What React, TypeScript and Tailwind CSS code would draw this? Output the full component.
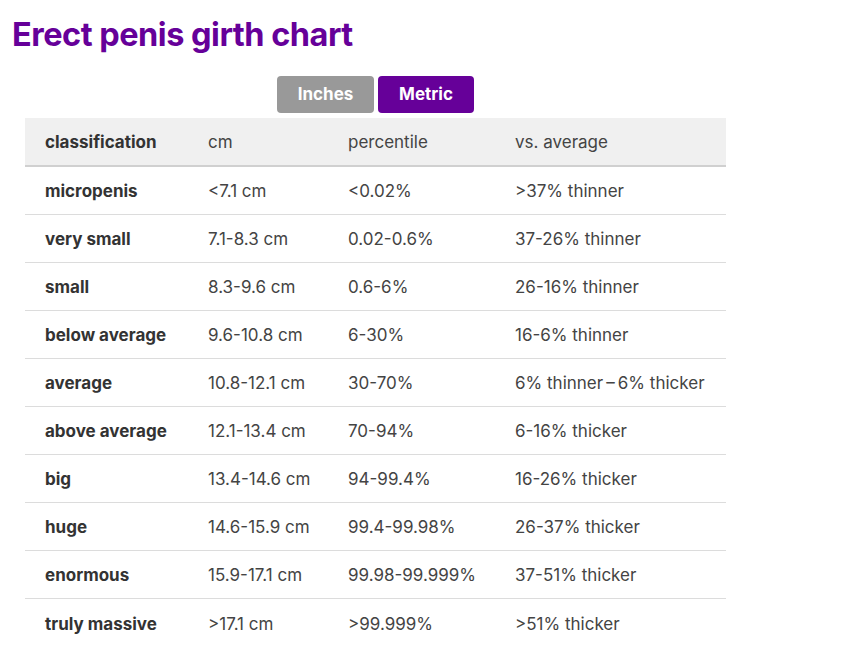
import React from "react";

const rows: [string, string, string, string][] = [
  ["micropenis", "<7.1 cm", "<0.02%", ">37% thinner"],
  ["very small", "7.1-8.3 cm", "0.02-0.6%", "37-26% thinner"],
  ["small", "8.3-9.6 cm", "0.6-6%", "26-16% thinner"],
  ["below average", "9.6-10.8 cm", "6-30%", "16-6% thinner"],
  ["average", "10.8-12.1 cm", "30-70%", "6% thinner\u2009\u2013\u20096% thicker"],
  ["above average", "12.1-13.4 cm", "70-94%", "6-16% thicker"],
  ["big", "13.4-14.6 cm", "94-99.4%", "16-26% thicker"],
  ["huge", "14.6-15.9 cm", "99.4-99.98%", "26-37% thicker"],
  ["enormous", "15.9-17.1 cm", "99.98-99.999%", "37-51% thicker"],
  ["truly massive", ">17.1 cm", ">99.999%", ">51% thicker"],
];

export default function App() {
  return (
    <div
      className="w-[842px] h-[662px] bg-white overflow-hidden"
      style={{ fontFamily: "Inter, 'Liberation Sans', sans-serif" }}
    >
      <h1 className="pl-[12px] pt-[15px] text-[32.5px] leading-[40px] font-bold text-[#660099] tracking-[-0.5px]">
        Erect penis girth chart
      </h1>
      <div className="w-[701px] ml-[25px] mt-[21px]">
        <div className="flex justify-center gap-[4px] h-[37px]">
          <div className="w-[97px] h-[37px] rounded-[4px] bg-[#999999] text-white font-bold text-[17px] flex items-center justify-center pt-[1px]">
            Inches
          </div>
          <div className="w-[96px] h-[37px] rounded-[4px] bg-[#660099] text-white font-bold text-[17px] flex items-center justify-center pt-[1px]">
            Metric
          </div>
        </div>
        <div className="mt-[5px] text-[17px] text-[#444]">
          <div className="flex h-[49px] items-center pt-[3px] bg-[#f0f0f0] border-b-2 border-[#d0d0d0]">
            <div className="w-[163px] pl-[20px] font-bold text-[#333]">classification</div>
            <div className="w-[140px] pl-[20px]">cm</div>
            <div className="w-[167px] pl-[20px]">percentile</div>
            <div className="flex-1 pl-[20px]">vs. average</div>
          </div>
          {rows.map((r, i) => (
            <div
              key={i}
              className={
                "flex h-[48px] items-center pt-[3px] " +
                (i < rows.length - 1 ? "border-b border-[#dcdcdc]" : "")
              }
            >
              <div className="w-[163px] pl-[20px] font-bold text-[#333]">{r[0]}</div>
              <div className="w-[140px] pl-[20px]">{r[1]}</div>
              <div className="w-[167px] pl-[20px]">{r[2]}</div>
              <div className="flex-1 pl-[20px] whitespace-nowrap">{r[3]}</div>
            </div>
          ))}
        </div>
      </div>
    </div>
  );
}
